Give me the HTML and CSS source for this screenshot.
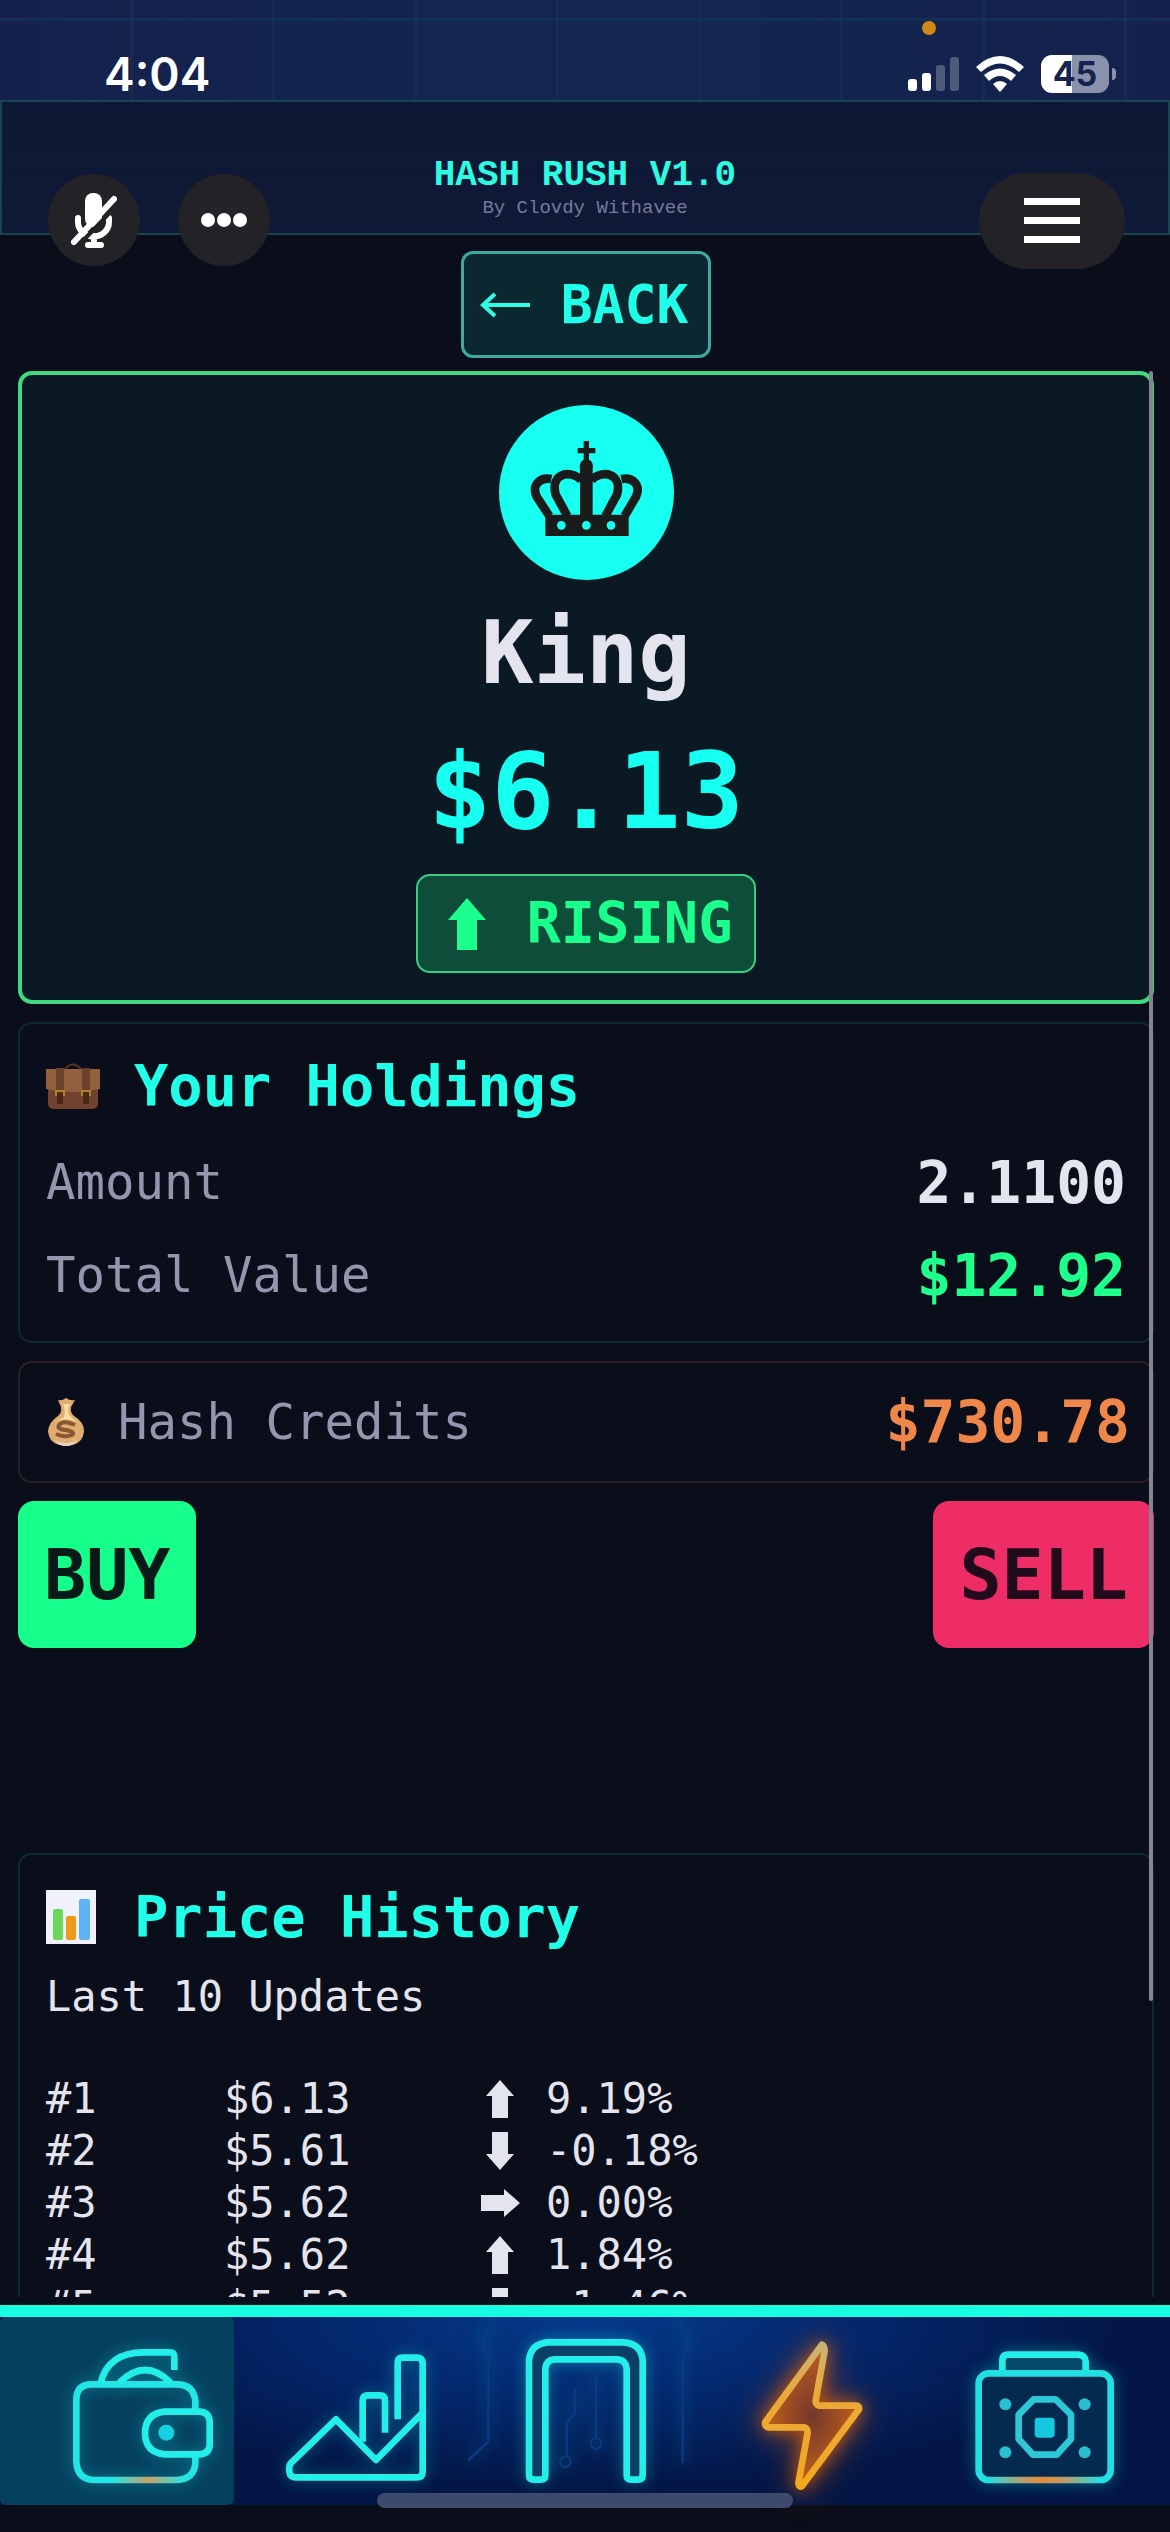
FILE: index.html
```html
<!DOCTYPE html>
<html lang="en">
<head>
    <meta charset="UTF-8">
    <meta name="viewport" content="width=device-width, initial-scale=1.0">
    <title>Hash Rush V1.0</title>
    <link rel="stylesheet" href="styles.css">
</head>
<body>
    <div class="app">
        <div class="status-bar">
            <span class="time">4:04</span>
            <span class="mic-dot"></span>
            <div class="status-icons">
                <svg class="signal" viewBox="0 0 51 34">
                    <rect x="0" y="22" width="9" height="12" rx="3" fill="#fff"/>
                    <rect x="14" y="16" width="9" height="18" rx="3" fill="#fff"/>
                    <rect x="28" y="8" width="9" height="26" rx="3" fill="#fff" opacity=".25"/>
                    <rect x="42" y="0" width="9" height="34" rx="3" fill="#fff" opacity=".25"/>
                </svg>
                <svg class="wifi" viewBox="0 0 48 36">
                    <path d="M0 11 Q24 -11 48 11 L43 16 Q24 -1 5 16 Z" fill="#fff"/>
                    <path d="M8 19 Q24 6 40 19 L35 25 Q24 15 13 25 Z" fill="#fff"/>
                    <path d="M17 28 Q24 22 31 28 L24 36 Z" fill="#fff"/>
                </svg>
                <div class="battery"><span class="battery-level">45</span></div>
            </div>
        </div>

        <header class="header">
            <h1>HASH RUSH V1.0</h1>
            <p>By Clovdy Withavee</p>
            <div class="float-left">
                <button class="round-btn" aria-label="Microphone off">
                    <svg viewBox="0 0 46 58" width="46" height="58">
                        <rect x="14" y="2" width="17" height="34" rx="8" fill="#fff"/>
                        <path d="M7 27 v4 a15 14 0 0 0 31 0 v-4 M23 45 v9 M17 54 h13" stroke="#fff" stroke-width="6" fill="none" stroke-linecap="round"/>
                        <path d="M6 56 L48 12" stroke="#232226" stroke-width="4"/>
                        <path d="M3 51 L43 8" stroke="#fff" stroke-width="6" stroke-linecap="round"/>
                    </svg>
                </button>
                <button class="round-btn" aria-label="More">
                    <svg viewBox="0 0 46 14" width="46" height="14" fill="#fff">
                        <circle cx="7" cy="7" r="7"/>
                        <circle cx="23" cy="7" r="7"/>
                        <circle cx="39" cy="7" r="7"/>
                    </svg>
                </button>
            </div>
            <button class="menu-btn" aria-label="Menu">
                <svg viewBox="0 0 56 46" width="56" height="46" fill="#fff">
                    <rect y="0" width="56" height="7"/>
                    <rect y="19" width="56" height="7"/>
                    <rect y="38" width="56" height="7"/>
                </svg>
            </button>
        </header>

        <main class="content">
            <button class="back-btn">
                <svg viewBox="0 0 50 26" width="50" height="26"><path d="M50 13 H3 M15 2 L3 13 L15 24" fill="none" stroke="#2effe6" stroke-width="4"/></svg>
                BACK
            </button>

            <section class="coin-card">
                <div class="coin-icon">
                    <!-- crown -->
                    <svg viewBox="327 105 525 525" fill="none" stroke="#191c1a">
                        <path d="M466 434 H716 V498 H466 Z" fill="#191c1a" stroke="none"/>
                        <path d="M570 440 V300 H608 V440 Z" fill="#191c1a" stroke="none"/>
                        <ellipse cx="589" cy="291" rx="20" ry="24" fill="#191c1a" stroke="none"/>
                        <path d="M589 213 V275 M563 242 H616" stroke-width="16"/>
                        <path d="M478 438 L440 380 C424 345 450 320 484 327 M704 438 L738 380 C754 345 728 320 694 327" stroke-width="26"/>
                        <path d="M532 438 L497 374 C480 310 540 297 574 330 M646 438 L681 374 C698 310 638 297 604 330" stroke-width="26"/>
                        <g fill="#17fff0" stroke="none">
                            <circle cx="514" cy="466" r="13"/>
                            <circle cx="589" cy="466" r="13"/>
                            <circle cx="663" cy="466" r="13"/>
                        </g>
                    </svg>
                </div>
                <h2 class="coin-name">King</h2>
                <div class="coin-price">$6.13</div>
                <div class="trend">
                    <svg viewBox="0 0 38 52" width="38" height="52"><path d="M19 0 L38 22 H29 V52 H9 V22 H0 Z" fill="#1bff8c"/></svg>
                    RISING
                </div>
            </section>

            <section class="panel">
                <h3>
                    <svg viewBox="0 0 54 46" width="54" height="46">
                        <path d="M19 6 Q27 -3 35 6" fill="none" stroke="#5a3322" stroke-width="2"/>
                        <rect x="2" y="10" width="50" height="36" rx="5" fill="#71422d"/>
                        <path d="M0 6 H54 V26 Q27 32 0 26 Z" fill="#93603e"/>
                        <path d="M10 5 h8 v23 h-8 Z M36 5 h8 v23 h-8 Z" fill="#6c4029"/>
                        <path d="M14 28 v13 M40 28 v13" stroke="#4a2818" stroke-width="6"/>
                        <path d="M10 33 v-5 h8 v5 M36 33 v-5 h8 v5" fill="none" stroke="#b08226" stroke-width="2"/>
                    </svg>
                    Your Holdings
                </h3>
                <div class="row">
                    <span class="label">Amount</span>
                    <span class="value">2.1100</span>
                </div>
                <div class="row">
                    <span class="label">Total Value</span>
                    <span class="value green">$12.92</span>
                </div>
            </section>

            <section class="panel credits">
                <span class="label with-icon">
                    <svg viewBox="0 0 36 48" width="36" height="48">
                        <path d="M10 2 Q14 3 18 0 Q22 3 27 2 L23 9 Q22 15 26 18 Q36 24 36 33 Q35 47 18 48 Q1 47 0 33 Q1 24 10 18 Q14 15 13 9 Z" fill="#e0ac70"/>
                        <path d="M15 6 Q18 12 16 19 L8 23 Q18 19 29 24 L21 17 Q19 12 22 6 Z" fill="#f7dda8"/>
                        <path d="M6 42 Q18 48 30 42 Q25 48 18 48 Q11 48 6 42" fill="#e9d2bd"/>
                        <path d="M27 27 Q17 22 12 26 Q7 31 18 32 Q28 34 24 37 Q17 40 8 36" fill="none" stroke="#8a5735" stroke-width="4"/>
                    </svg>
                    Hash Credits
                </span>
                <span class="value orange">$730.78</span>
            </section>

            <div class="actions">
                <button class="buy-btn">BUY</button>
                <button class="sell-btn">SELL</button>
            </div>

            <section class="panel history">
                <h3>
                    <svg viewBox="0 0 50 54" width="50" height="54">
                        <rect width="50" height="54" fill="#f0f1fa"/>
                        <rect x="7" y="19" width="10" height="31" rx="2" fill="#6bd957"/>
                        <rect x="20" y="26" width="10" height="24" rx="2" fill="#f09a1c"/>
                        <rect x="33" y="9" width="11" height="41" rx="2" fill="#5eb3f7"/>
                    </svg>
                    Price History
                </h3>
                <p>Last 10 Updates</p>
                <table>
                    <tr>
                        <td class="num">#1</td>
                        <td class="price">$6.13</td>
                        <td class="arrow"><svg viewBox="0 0 40 40"><path d="M20 1 L34 17 H28 V39 H12 V17 H6 Z"/></svg></td>
                        <td>9.19%</td>
                    </tr>
                    <tr>
                        <td class="num">#2</td>
                        <td class="price">$5.61</td>
                        <td class="arrow"><svg viewBox="0 0 40 40"><path d="M20 39 L34 23 H28 V1 H12 V23 H6 Z"/></svg></td>
                        <td>-0.18%</td>
                    </tr>
                    <tr>
                        <td class="num">#3</td>
                        <td class="price">$5.62</td>
                        <td class="arrow"><svg viewBox="0 0 40 40"><path d="M40 20 L24 6 V12 H1 V28 H24 V34 Z"/></svg></td>
                        <td>0.00%</td>
                    </tr>
                    <tr>
                        <td class="num">#4</td>
                        <td class="price">$5.62</td>
                        <td class="arrow"><svg viewBox="0 0 40 40"><path d="M20 1 L34 17 H28 V39 H12 V17 H6 Z"/></svg></td>
                        <td>1.84%</td>
                    </tr>
                    <tr>
                        <td class="num">#5</td>
                        <td class="price">$5.52</td>
                        <td class="arrow"><svg viewBox="0 0 40 40"><path d="M20 39 L34 23 H28 V1 H12 V23 H6 Z"/></svg></td>
                        <td>-1.46%</td>
                    </tr>
                </table>
            </section>
            <div class="scroll-thumb"></div>
        </main>

        <nav class="nav">
            <button class="nav-item active" aria-label="Wallet">
                <svg viewBox="0 111 702 564" class="glow">
                    <defs>
                        <radialGradient id="warmWallet" gradientUnits="userSpaceOnUse" cx="445" cy="602" r="110">
                            <stop offset="0" stop-color="#c9a26a"/>
                            <stop offset="1" stop-color="#22e6e6"/>
                        </radialGradient>
                    </defs>
                    <path d="M586 390 V365 Q582 313 530 313 H275 Q229 313 229 360 V545 Q232 600 285 600 H530 Q582 598 586 550 V528" stroke="url(#warmWallet)"/>
                    <path d="M302 308 Q325 218 430 217 H510 Q523 217 523 232 V270 M358 308 Q436 232 512 308"/>
                    <path d="M600 395 H495 Q436 400 435 460 Q436 517 495 523 H600 Q628 520 629 495 V425 Q628 398 600 395 Z"/>
                    <circle cx="499" cy="458" r="24" fill="#16cfe0" stroke="none"/>
                </svg>
            </button>
            <button class="nav-item" aria-label="Market">
                <svg viewBox="702 111 702 564" class="glow">
                    <path d="M1268 398 L1128 540 L1008 418 L872 550 Q866 560 868 575 Q870 592 885 592 H1250 Q1268 592 1268 575 V248 Q1266 233 1252 233 H1208 Q1193 233 1193 248 V418"/>
                    <path d="M1088 485 V362 Q1088 346 1103 346 H1140 Q1155 346 1155 362 V458"/>
                </svg>
            </button>
            <button class="nav-item" aria-label="Home">
                <svg viewBox="84 111 702 564" class="glow">
                    <path d="M175 111 Q130 145 130 190 L145 235 V485 L80 545 M695 111 Q742 145 742 190 L728 235 V550 M405 320 V400 L380 430 V528 M468 265 V472" stroke="#0a3a86" stroke-width="7"/>
                    <circle cx="376" cy="545" r="16" stroke="#0a3a86" stroke-width="6"/>
                    <circle cx="468" cy="490" r="16" stroke="#0a3a86" stroke-width="6"/>
                    <path d="M267 585 V240 Q273 190 325 187 H550 Q603 190 608 240 V585 Q608 599 594 599 H574 Q560 599 560 585 V265 Q557 240 533 238 H343 Q318 240 316 265 V585 Q316 599 302 599 H281 Q267 599 267 585 Z" fill="#0a3f68"/>
                </svg>
            </button>
            <button class="nav-item" aria-label="Boost">
                <svg viewBox="-84 111 702 564" class="glow-orange">
                    <defs>
                        <linearGradient id="bolt" x1="0" y1="0" x2="0" y2="1">
                            <stop offset="0" stop-color="#c9b274"/>
                            <stop offset=".35" stop-color="#eba93a"/>
                            <stop offset="1" stop-color="#f2a81d"/>
                        </linearGradient>
                        <radialGradient id="boltFill">
                            <stop offset="0" stop-color="#74382c"/>
                            <stop offset="1" stop-color="#c2601a"/>
                        </radialGradient>
                    </defs>
                    <path d="M276 194 L106 426 Q103 440 116 442 H222 Q233 444 233 458 L205 610 Q207 624 216 618 L387 388 Q389 377 378 377 H268 Q257 375 257 362 L284 212 Q283 196 276 194 Z" fill="url(#boltFill)" stroke="url(#bolt)"/>
                </svg>
            </button>
            <button class="nav-item" aria-label="Miner">
                <svg viewBox="618 111 702 564" class="glow">
                    <defs>
                        <radialGradient id="warmMiner" gradientUnits="userSpaceOnUse" cx="942" cy="602" r="170">
                            <stop offset="0" stop-color="#e08b3c"/>
                            <stop offset=".35" stop-color="#c09a66"/>
                            <stop offset="1" stop-color="#22dfe4"/>
                        </radialGradient>
                    </defs>
                    <path d="M817 275 V240 Q818 224 834 224 H1046 Q1066 226 1067 245 V275" fill="#044a68"/>
                    <rect x="746" y="280" width="396" height="320" rx="30" stroke="url(#warmMiner)" fill="#042a50"/>
                    <path d="M911 358 H977 L1023 404 V477 L980 524 H909 L866 477 V404 Z" stroke="#2cc8d8"/>
                    <rect x="914" y="413" width="60" height="60" rx="10" fill="#16c8de" stroke="none"/>
                    <g fill="#2bbdd0" stroke="none">
                        <circle cx="826" cy="373" r="18"/>
                        <circle cx="1064" cy="373" r="18"/>
                        <circle cx="826" cy="517" r="18"/>
                        <circle cx="1064" cy="517" r="18"/>
                    </g>
                </svg>
            </button>
        </nav>
        <div class="home-indicator"></div>
    </div>
</body>
</html>
```
FILE: styles.css
```css
* {
    box-sizing: border-box;
}
body {
    margin: 0;
    background-color: #0a0d1a;
    color: #e4e4ee;
    font-family: "DejaVu Sans Mono", monospace;
}
h1, h2, h3, p {
    margin: 0;
}
button {
    border: none;
    padding: 0;
    margin: 0;
    font-family: inherit;
    cursor: pointer;
}
svg {
    display: block;
    flex-shrink: 0;
}
.app {
    position: relative;
    display: flex;
    flex-direction: column;
    height: 100vh;
    padding-bottom: 27px;
    overflow: hidden;
}

/* status bar */
.status-bar {
    position: relative;
    flex-shrink: 0;
    display: flex;
    justify-content: space-between;
    align-items: center;
    height: 100px;
    padding: 48px 54px 0 104px;
    background-color: #14244f;
    background-image:
        repeating-linear-gradient(to right, transparent 0 130px, rgba(20, 80, 110, 0.2) 130px 133px, transparent 133px 142px),
        linear-gradient(transparent 18px, rgba(20, 80, 110, 0.25) 18px 21px, transparent 21px),
        linear-gradient(to right, #15214c, #12264f 40%, #12264f 60%, #15214c);
}
.time {
    font-family: Inter, sans-serif;
    font-size: 46px;
    line-height: 52px;
    font-weight: 600;
    color: #fff;
}
.mic-dot {
    position: absolute;
    top: 21px;
    right: 234px;
    width: 14px;
    height: 14px;
    border-radius: 50%;
    background-color: #d08818;
}
.status-icons {
    display: flex;
    align-items: center;
    gap: 17px;
}
.signal {
    width: 51px;
    height: 34px;
}
.wifi {
    width: 48px;
    height: 36px;
}
.battery {
    display: flex;
    align-items: center;
    gap: 3px;
}
.battery::after {
    content: "";
    width: 4px;
    height: 12px;
    border-radius: 0 4px 4px 0;
    background-color: #8a91aa;
}
.battery-level {
    width: 68px;
    height: 38px;
    border-radius: 11px;
    background: linear-gradient(to right, #fff 45%, #8a91aa 45%);
    color: #14244f;
    font-family: Inter, sans-serif;
    font-size: 34px;
    line-height: 38px;
    font-weight: 700;
    text-align: center;
}

/* header */
.header {
    position: relative;
    flex-shrink: 0;
    height: 135px;
    padding-top: 54px;
    border: 2px solid #164450;
    background: linear-gradient(#0e1733, #0f1a37);
    text-align: center;
    font-family: "Liberation Mono", monospace;
    z-index: 1;
}
.header h1 {
    font-size: 36px;
    line-height: 40px;
    color: #2dfbe2;
}
.header p {
    font-size: 19px;
    line-height: 24px;
    color: #77799a;
}
.float-left {
    position: absolute;
    top: 72px;
    left: 46px;
    display: flex;
    gap: 38px;
}
.round-btn, .menu-btn {
    display: flex;
    justify-content: center;
    align-items: center;
    background-color: #232226;
}
.round-btn {
    width: 92px;
    height: 92px;
    border-radius: 50%;
}
.menu-btn {
    position: absolute;
    top: 71px;
    right: 43px;
    width: 146px;
    height: 96px;
    border-radius: 48px;
}

/* content */
.content {
    position: relative;
    flex: 1;
    min-height: 0;
    overflow: hidden;
    display: flex;
    flex-direction: column;
    gap: 18px;
    padding: 16px 16px 0 18px;
}
.content > * {
    flex-shrink: 0;
}
.back-btn {
    align-self: center;
    display: flex;
    align-items: center;
    gap: 31px;
    height: 107px;
    padding: 0 20px 0 16px;
    margin-bottom: -5px;
    border: 3px solid #3fa99f;
    border-radius: 12px;
    background-color: #0b2830;
    color: #20ffe8;
    font-size: 53px;
    font-weight: bold;
}
.coin-card {
    display: flex;
    flex-direction: column;
    align-items: center;
    gap: 16px;
    padding: 30px 20px 27px;
    border: 4px solid #3fd980;
    border-radius: 14px;
    background-color: #0a1924;
}
.coin-icon {
    width: 175px;
    height: 175px;
    border-radius: 50%;
    background-color: #17fff0;
}
.coin-name {
    font-size: 87px;
    line-height: 114px;
}
.coin-price {
    font-size: 105px;
    line-height: 132px;
    font-weight: bold;
    color: #17fff0;
}
.trend {
    display: flex;
    align-items: center;
    gap: 41px;
    padding: 0 22px 0 30px;
    border: 2px solid #37cf84;
    border-radius: 14px;
    background-color: #0e4d3a;
    color: #1bff8c;
    font-size: 57px;
    line-height: 95px;
    font-weight: bold;
}
.panel {
    padding: 30px 26px 19px;
    border: 2px solid #0d2a33;
    border-radius: 14px;
}
.panel h3 {
    display: flex;
    align-items: center;
    gap: 34px;
    margin-bottom: 18px;
    font-size: 57px;
    line-height: 64px;
    color: #20ffe8;
}
.row {
    display: flex;
    justify-content: space-between;
    align-items: center;
    height: 93px;
}
.label {
    font-size: 49px;
    color: #9496ae;
}
.value {
    font-size: 58px;
    font-weight: bold;
}
.green {
    color: #1fff8c;
}
.orange {
    color: #f0874a;
}
.credits {
    display: flex;
    justify-content: space-between;
    align-items: center;
    height: 122px;
    padding: 0 22px 0 28px;
    border-color: #2a2024;
}
.with-icon {
    display: flex;
    align-items: center;
    gap: 34px;
}
.actions {
    display: flex;
    justify-content: space-between;
    align-items: flex-start;
    height: 334px;
}
.buy-btn, .sell-btn {
    height: 147px;
    padding: 0 26px;
    border-radius: 16px;
    font-size: 70px;
    font-weight: bold;
}
.buy-btn {
    background-color: #17ff8b;
    color: #071a1a;
}
.sell-btn {
    background-color: #ee2d67;
    color: #200a1c;
}

/* price history */
.history h3 {
    gap: 38px;
    margin-bottom: 22px;
}
.history p {
    margin-bottom: 50px;
    font-size: 42px;
    line-height: 52px;
}
.history table {
    border-collapse: collapse;
    font-size: 42px;
    line-height: 52px;
}
.history td {
    padding: 0;
}
.history .num {
    width: 178px;
}
.history .price {
    width: 256px;
}
.history .arrow {
    width: 66px;
}
.arrow svg {
    width: 40px;
    height: 40px;
    fill: #e4e4ee;
}
.scroll-thumb {
    position: absolute;
    top: 136px;
    right: 17px;
    width: 4px;
    height: 1630px;
    border-radius: 2px;
    background-color: #85858d;
}

/* bottom nav */
.nav {
    flex-shrink: 0;
    display: flex;
    margin-top: 8px;
    border-top: 12px solid #18ffe2;
    background: radial-gradient(ellipse at 50% 0, #05398a 0, #04266a 35%, rgba(3, 22, 70, 0) 65%), #031646;
}
.nav-item {
    flex: 1;
    height: 188px;
    background: none;
}
.nav-item svg {
    width: 100%;
    height: 188px;
    fill: none;
    stroke: #24eeea;
    stroke-width: 20;
    stroke-linejoin: round;
}
.nav-item.active {
    border-radius: 6px;
    background-color: #06405f;
}
.glow {
    filter: drop-shadow(0 0 8px rgba(0, 225, 220, 0.4));
}
.glow-orange {
    filter: drop-shadow(0 0 8px rgba(216, 98, 12, 0.7)) drop-shadow(0 0 16px rgba(190, 80, 10, 0.7));
}
.home-indicator {
    position: absolute;
    left: 50%;
    bottom: 24px;
    width: 416px;
    height: 15px;
    margin-left: -208px;
    border-radius: 8px;
    background-color: #3d4a6e;
}
```
